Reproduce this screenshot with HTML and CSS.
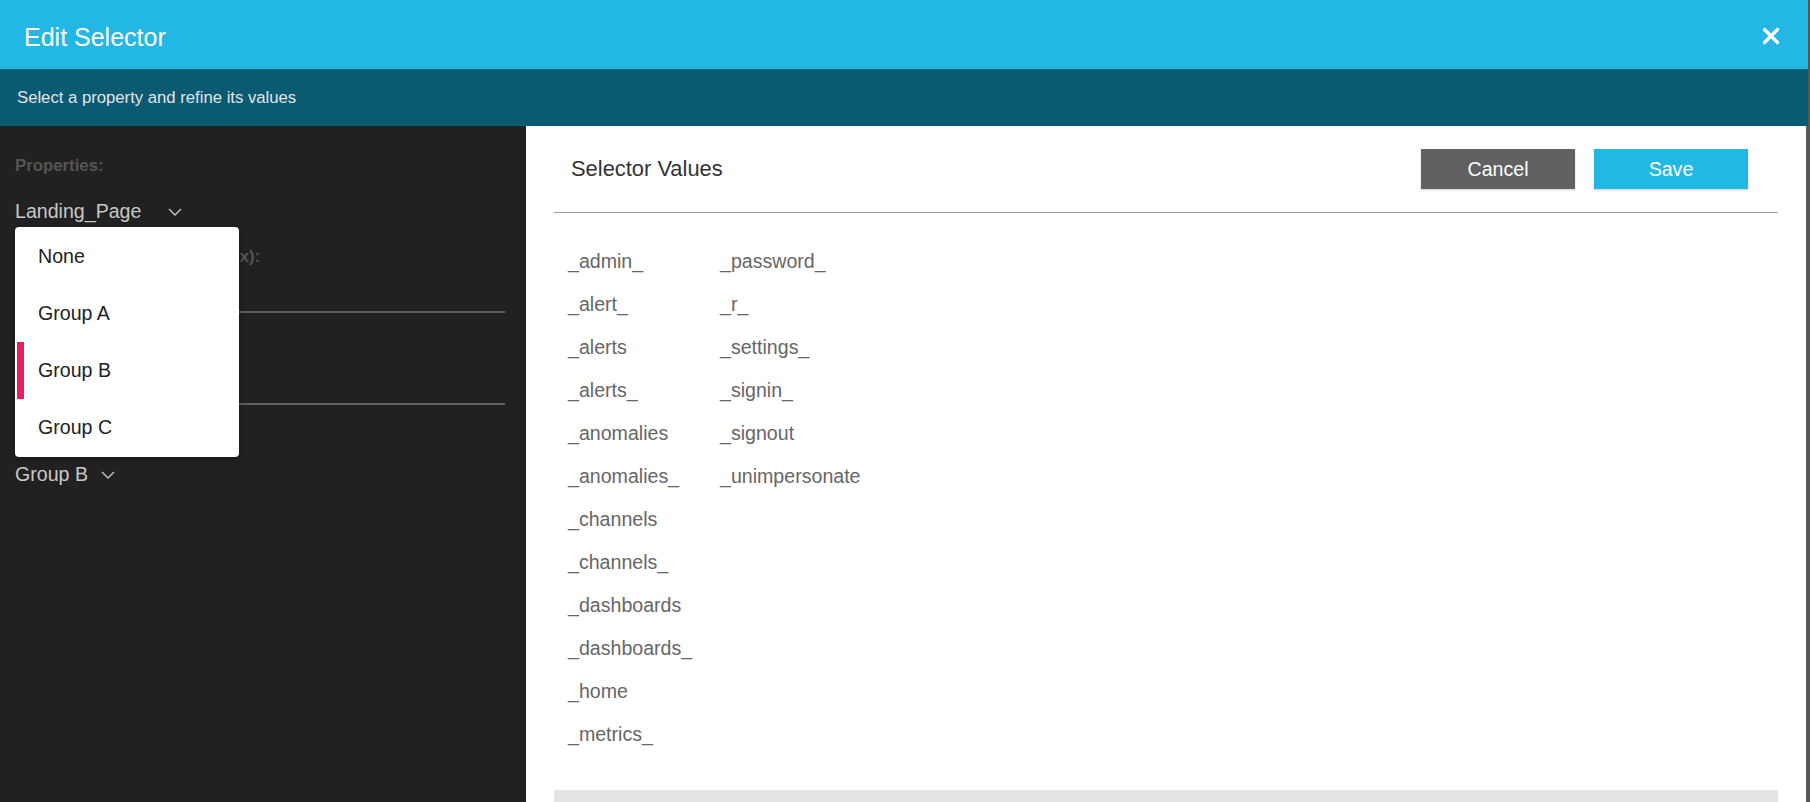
FILE: index.html
```html
<!DOCTYPE html>
<html lang="en">
<head>
<meta charset="utf-8">
<title>Edit Selector</title>
<link rel="stylesheet" href="styles.css">
</head>
<body>
<div class="modal">
  <header class="titlebar">
    <h1>Edit Selector</h1>
    <button class="close" aria-label="Close">
      <svg viewBox="0 0 18 18" width="18" height="18"><path d="M2.5 2.5 L15.5 15.5 M15.5 2.5 L2.5 15.5" stroke="#fff" stroke-width="3.4" stroke-linecap="round" fill="none"/></svg>
    </button>
  </header>
  <div class="subbar">Select a property and refine its values</div>
  <div class="body">
    <aside class="side">
      <div class="label">Properties:</div>
      <div class="select-wrap">
        <div class="select">
          <span>Landing_Page</span>
          <svg class="chev chev-wide" viewBox="0 0 14 8"><path d="M1 1 L7 7 L13 1" stroke="#c8c8c8" stroke-width="1.4" fill="none"/></svg>
        </div>
        <ul class="menu">
          <li class="item">None</li>
          <li class="item">Group A</li>
          <li class="item selected">Group B</li>
          <li class="item">Group C</li>
        </ul>
      </div>
      <div class="label gap-label">Find Values Matching (RegEx):</div>
      <div class="input"></div>
      <div class="label gap-label">Exclude Values (RegEx):</div>
      <div class="input input-2"></div>
      <div class="label group-label">Group:</div>
      <div class="select group-select">
        <span>Group B</span>
        <svg class="chev" viewBox="0 0 14 8"><path d="M1 1 L7 7 L13 1" stroke="#c8c8c8" stroke-width="1.4" fill="none"/></svg>
      </div>
    </aside>
    <main class="content">
      <div class="content-head">
        <h2>Selector Values</h2>
        <div class="actions">
          <button class="btn cancel">Cancel</button>
          <button class="btn save">Save</button>
        </div>
      </div>
      <ul class="values">
        <li>_admin_</li>
        <li>_alert_</li>
        <li>_alerts</li>
        <li>_alerts_</li>
        <li>_anomalies</li>
        <li>_anomalies_</li>
        <li>_channels</li>
        <li>_channels_</li>
        <li>_dashboards</li>
        <li>_dashboards_</li>
        <li>_home</li>
        <li>_metrics_</li>
        <li>_password_</li>
        <li>_r_</li>
        <li>_settings_</li>
        <li>_signin_</li>
        <li>_signout</li>
        <li>_unimpersonate</li>
      </ul>
      <div class="footer-bar"></div>
    </main>
  </div>
</div>
</body>
</html>
```

FILE: styles.css
```css
html, body {
  margin: 0;
  padding: 0;
  height: 100%;
  overflow: hidden;
  background: #555;
  font-family: "Liberation Sans", Arial, sans-serif;
}

.modal {
  width: 1808px;
  height: 802px;
  display: flex;
  flex-direction: column;
  background: #fff;
}

.titlebar {
  height: 69px;
  flex: none;
  background: #23b7e5;
  display: flex;
  align-items: center;
  justify-content: space-between;
  padding: 0 28px 0 24px;
  box-sizing: border-box;
}

.titlebar h1 {
  margin: 5px 0 0;
  font-size: 25px;
  font-weight: normal;
  color: #fff;
}

.close {
  background: none;
  border: 0;
  padding: 0;
  width: 18px;
  height: 18px;
  display: block;
  cursor: pointer;
  margin-top: 2px;
}

.close svg {
  display: block;
}

.subbar {
  height: 57px;
  flex: none;
  background: #0a5a72;
  color: #e4e4e4;
  font-size: 16.7px;
  padding-left: 17px;
  display: flex;
  align-items: center;
}

.body {
  flex: 1;
  display: flex;
  min-height: 0;
}

.side {
  width: 526px;
  flex: none;
  background: #212121;
  padding: 30px 21px 0 15px;
  box-sizing: border-box;
}

.label {
  font-size: 16.8px;
  line-height: 20px;
  font-weight: bold;
  color: #555;
  white-space: nowrap;
}

.gap-label {
  margin-top: 24px;
}

.group-label {
  margin-top: 15px;
}

.select-wrap {
  position: relative;
  margin-top: 23px;
}

.select {
  display: flex;
  align-items: center;
  font-size: 19.6px;
  line-height: 24px;
  color: #c8c8c8;
}

.chev {
  width: 14px;
  height: 8px;
  margin-left: 13px;
  margin-top: 2px;
}

.chev-wide {
  margin-left: 27px;
}

.group-select {
  margin-top: 22px;
}

.input {
  height: 44px;
  border-bottom: 2px solid #5f5f5f;
}

.input-2 {
  height: 46px;
}

.menu {
  position: absolute;
  top: calc(100% + 4px);
  left: 0;
  width: 224px;
  margin: 0;
  padding: 1px 0;
  list-style: none;
  background: #fff;
  border-radius: 4px;
  box-shadow: 0 2px 6px rgba(0, 0, 0, 0.3);
  z-index: 5;
}

.item {
  position: relative;
  height: 57px;
  line-height: 57px;
  padding-left: 23px;
  font-size: 19.6px;
  color: #222;
}

.item.selected::before {
  content: "";
  position: absolute;
  left: 2px;
  top: 0;
  bottom: 0;
  width: 7px;
  background: #ea1d63;
}

.content {
  flex: 1;
  display: flex;
  flex-direction: column;
  min-width: 0;
  border-right: 2px solid #5a5a5a;
}

.content-head {
  display: flex;
  align-items: center;
  justify-content: space-between;
  margin: 0 28px;
  padding: 23px 30px 23px 17px;
  border-bottom: 1px solid #9a9a9a;
}

.content-head h2 {
  margin: 0;
  font-size: 21.9px;
  font-weight: normal;
  color: #333;
}

.actions {
  display: flex;
  gap: 19px;
}

.btn {
  width: 154px;
  height: 40px;
  border: 0;
  padding: 0;
  font-family: "Liberation Sans", Arial, sans-serif;
  font-size: 19.6px;
  color: #fff;
  box-shadow: 0 1px 2px rgba(0, 0, 0, 0.2);
  cursor: pointer;
}

.cancel {
  background: #616161;
}

.save {
  background: #23b7e5;
}

.values {
  list-style: none;
  margin: 27px 28px 0;
  padding: 0 0 0 14px;
  display: grid;
  grid-template-rows: repeat(12, 43px);
  grid-template-columns: 152px 152px;
  grid-auto-flow: column;
  font-size: 19.6px;
  line-height: 43px;
  color: #666;
}

.footer-bar {
  margin: 34px 28px 0;
  height: 40px;
  flex: none;
  background: #e4e4e4;
}
```
